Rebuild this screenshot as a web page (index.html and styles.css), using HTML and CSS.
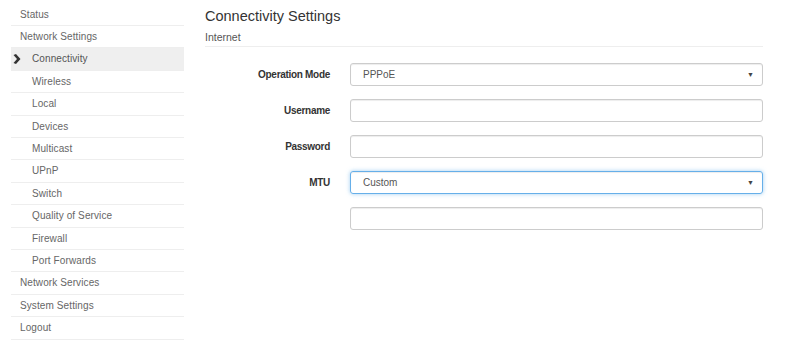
FILE: index.html
```html
<!DOCTYPE html>
<html lang="en">
<head>
    <meta charset="UTF-8">
    <title>Connectivity Settings</title>
    <link rel="stylesheet" href="styles.css">
</head>
<body>
    <div class="layout">
        <ul class="sidebar">
            <li class="nav-item">Status</li>
            <li class="nav-item">Network Settings</li>
            <li class="nav-item sub active">
                <svg class="chevron" width="8" height="10" viewBox="0 0 8 10"><path d="M0.5 1 L3 0 L7.5 5 L3 10 L0.5 9 L4 5 Z" fill="#333"/></svg>
                Connectivity
            </li>
            <li class="nav-item sub">Wireless</li>
            <li class="nav-item sub">Local</li>
            <li class="nav-item sub">Devices</li>
            <li class="nav-item sub">Multicast</li>
            <li class="nav-item sub">UPnP</li>
            <li class="nav-item sub">Switch</li>
            <li class="nav-item sub">Quality of Service</li>
            <li class="nav-item sub">Firewall</li>
            <li class="nav-item sub">Port Forwards</li>
            <li class="nav-item">Network Services</li>
            <li class="nav-item">System Settings</li>
            <li class="nav-item">Logout</li>
        </ul>

        <div class="content">
            <h1 class="title">Connectivity Settings</h1>
            <h2 class="section">Internet</h2>

            <form class="settings-form">
                <label class="form-label">Operation Mode</label>
                <div class="select-box">
                    <span>PPPoE</span>
                    <span class="caret">&#9660;</span>
                </div>

                <label class="form-label">Username</label>
                <div class="text-box"></div>

                <label class="form-label">Password</label>
                <div class="text-box"></div>

                <label class="form-label">MTU</label>
                <div class="select-box focused">
                    <span>Custom</span>
                    <span class="caret">&#9660;</span>
                </div>

                <span></span>
                <div class="text-box"></div>
            </form>
        </div>
    </div>
</body>
</html>
```

FILE: styles.css
```css
:root {
    --text-main: #555;
    --text-dark: #333;
    --line: #eee;
    --input-border: #ccc;
    --focus-border: #66afe9;
}

body {
    margin: 0;
    background: #fff;
    color: var(--text-main);
    font-family: 'Liberation Sans', Arial, sans-serif;
    font-size: 10px;
}

.layout {
    display: flex;
    padding-left: 11px;
}

.sidebar {
    list-style: none;
    margin: 3.6px 0 0 0;
    padding: 0;
    width: 173px;
}

.nav-item {
    padding: 3px 9px;
    line-height: 15.4px;
    border-bottom: 1px solid var(--line);
    color: #666;
    letter-spacing: 0.1px;
}

.nav-item.sub {
    padding-left: 21px;
}

.nav-item.active {
    position: relative;
    background: #efefef;
    color: var(--text-main);
}

.chevron {
    position: absolute;
    left: 2px;
    top: 6px;
}

.content {
    margin-left: 21px;
    width: 558px;
}

.title {
    margin: 6px 0 4px;
    font-size: 14.5px;
    line-height: 20px;
    font-weight: normal;
    color: var(--text-dark);
}

.section {
    margin: 0;
    padding-bottom: 1px;
    font-size: 10.5px;
    line-height: 15px;
    font-weight: normal;
    color: var(--text-main);
    border-bottom: 1px solid var(--line);
}

.settings-form {
    display: grid;
    grid-template-columns: 125px 1fr;
    column-gap: 20px;
    row-gap: 13px;
    margin-top: 16px;
    align-items: center;
}

.form-label {
    text-align: right;
    font-weight: bold;
    color: var(--text-dark);
    letter-spacing: -0.3px;
}

.text-box,
.select-box {
    height: 23px;
    box-sizing: border-box;
    border: 1px solid var(--input-border);
    border-radius: 3px;
    box-shadow: inset 0 1px 1px rgba(0, 0, 0, 0.075);
}

.select-box {
    display: flex;
    align-items: center;
    justify-content: space-between;
    padding: 0 8px 0 12px;
    color: var(--text-main);
}

.select-box.focused {
    border-color: var(--focus-border);
    box-shadow: inset 0 1px 1px rgba(0, 0, 0, 0.075), 0 0 4px rgba(102, 175, 233, 0.6);
}

.caret {
    font-size: 7px;
    color: #444;
}
```
